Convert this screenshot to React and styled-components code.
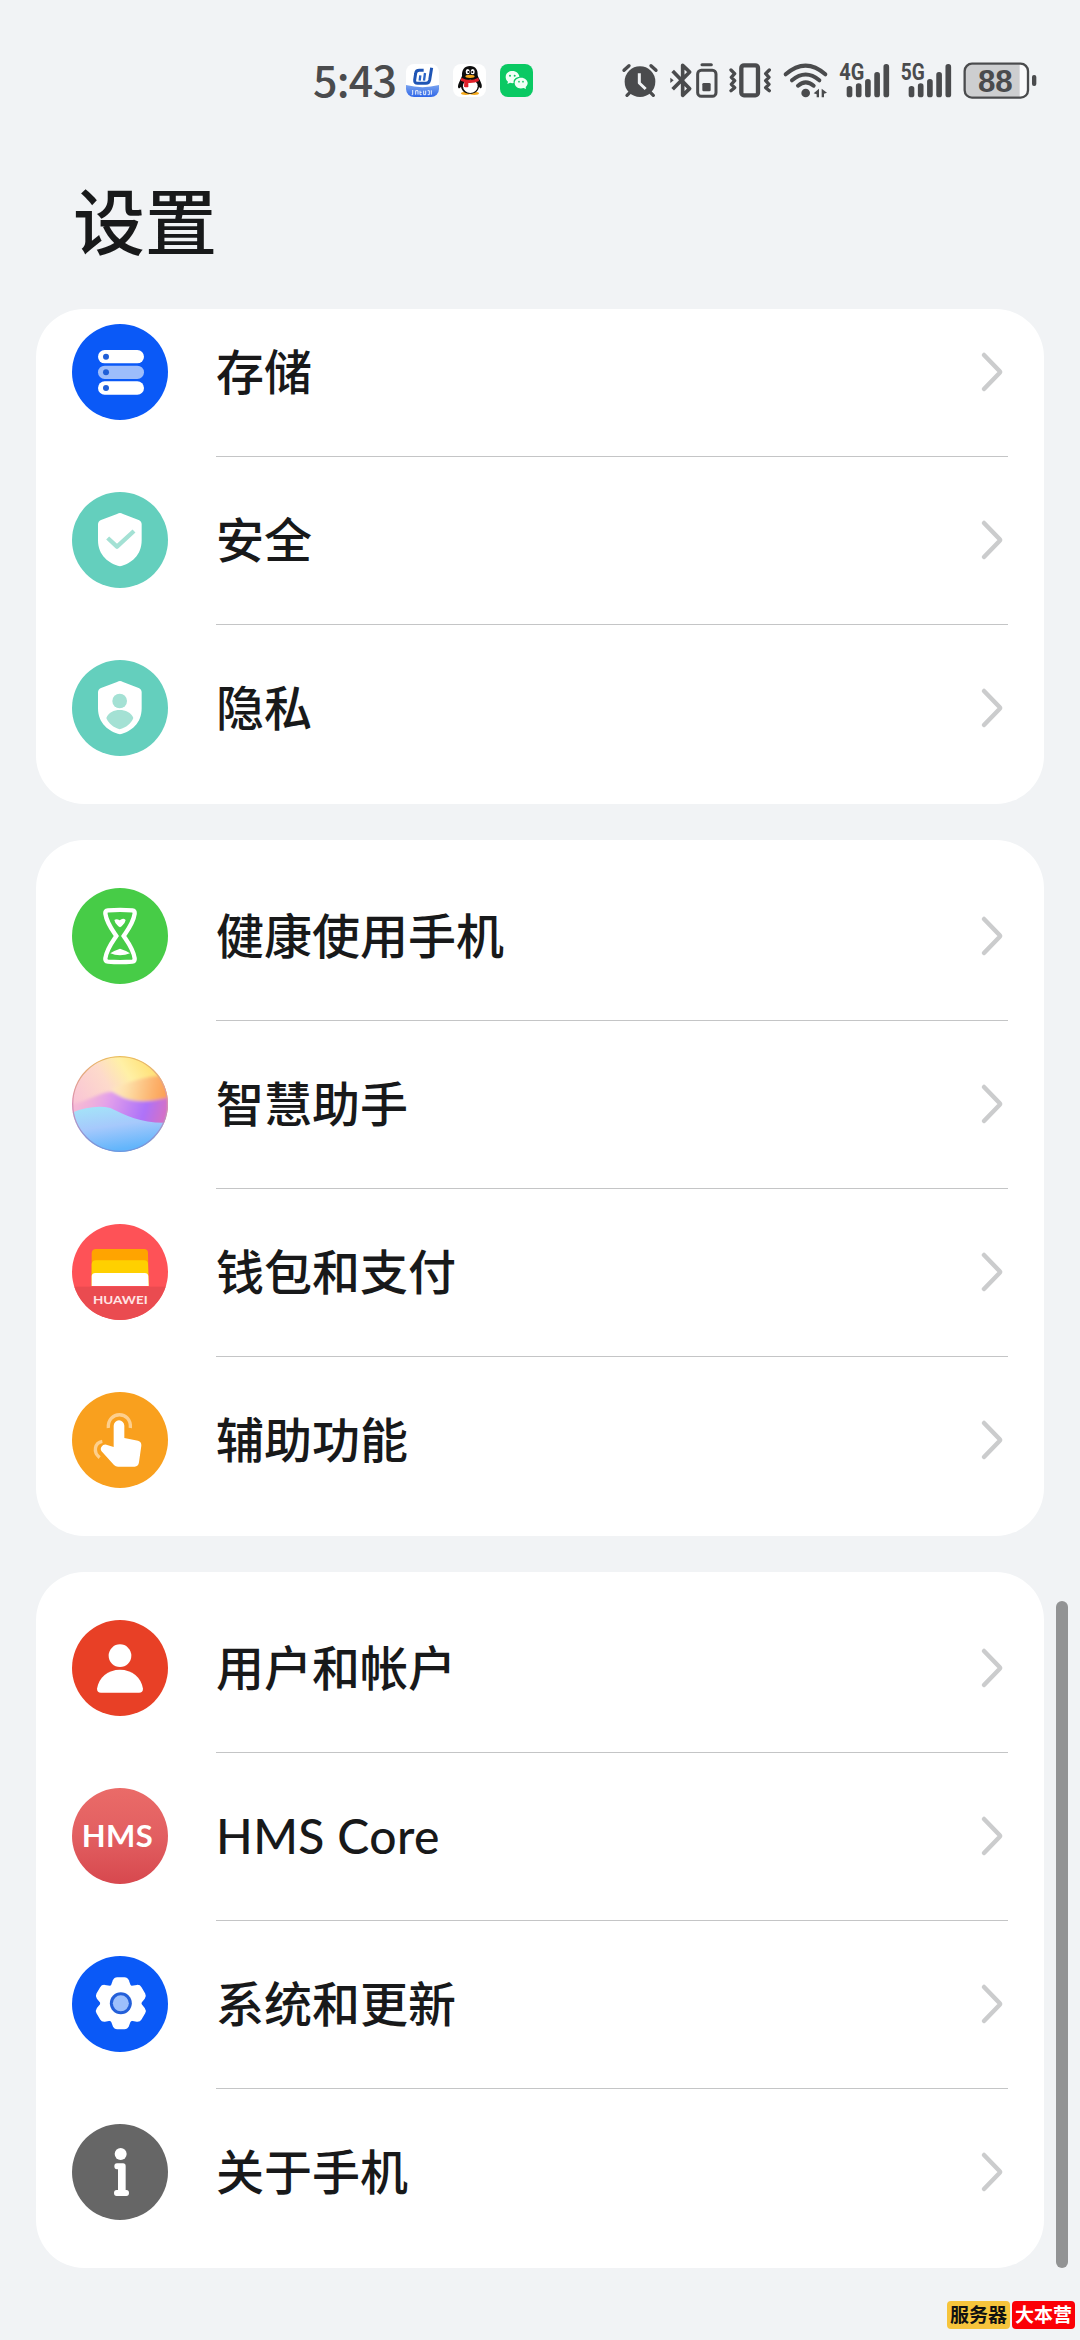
import React from 'react';
import styled, { createGlobalStyle } from 'styled-components';

const GlobalStyle = createGlobalStyle`
  * {
    box-sizing: border-box;
  }
  body {
    margin: 0;
    background: #f1f3f5;
    font-family: "Noto Sans CJK SC", "Noto Sans", sans-serif;
  }
`;

const INK = '#4a4b4d';

const Screen = styled.div`
  position: relative;
  display: flex;
  flex-direction: column;
  width: 1080px;
  height: 2340px;
  overflow: hidden;
  background: #f1f3f5;
  color: #18191a;
`;

const StatusBar = styled.div`
  display: flex;
  align-items: center;
  height: 165px;
  padding: 0 40px 0 313px;
  color: ${INK};
`;

const Clock = styled.span`
  width: 93px;
  font-family: "Noto Sans CJK SC", sans-serif;
  font-size: 43px;
  font-weight: 500;
  line-height: 60px;
  letter-spacing: -0.8px;
  margin-bottom: 9px;
  white-space: nowrap;
`;

const AppIcons = styled.div`
  display: flex;
  gap: 14px;
  margin-bottom: 4px;
`;

const AppIcon = styled.svg`
  display: block;
  width: 33px;
  height: 33px;
  border-radius: 8px;
  background: ${(props) => props.$bg || 'white'};
`;

const SystemIcons = styled.div`
  display: flex;
  margin-left: auto;
`;

const SystemIcon = styled.svg`
  display: block;
  width: ${(props) => props.$w}px;
  height: 65px;
`;

const Title = styled.h1`
  margin: 0;
  height: 144px;
  padding-left: 73px;
  font-size: 72px;
  font-weight: 500;
  line-height: 105px;
`;

const Cards = styled.main`
  display: flex;
  flex-direction: column;
  gap: 36px;
  padding: 0 36px;
`;

const Card = styled.section`
  padding: ${(props) => (props.$scrolled ? '0 36px 12px' : '12px 36px')};
  border-radius: 48px;
  background: white;
  overflow: hidden;
`;

const Rows = styled.div`
  margin-top: ${(props) => (props.$scrolled ? '-21px' : '0')};
`;

const Row = styled.div`
  display: flex;
  align-items: center;
  height: 168px;
`;

const RowIcon = styled.svg`
  flex: none;
  width: 96px;
  height: 96px;
  margin-right: 48px;
  border-radius: 50%;
  background: ${(props) => props.$bg};
`;

const RowBody = styled.div`
  display: flex;
  align-items: center;
  justify-content: space-between;
  flex: 1;
  height: 168px;
  padding: 0 3px 1px 0;
  border-top: 1px solid ${(props) => (props.$divided ? '#c4c5c6' : 'transparent')};
`;

const Label = styled.span`
  font-family: ${(props) => (props.$latin ? 'Lato, sans-serif' : 'inherit')};
  font-size: 48px;
  font-weight: 500;
  line-height: 72px;
  letter-spacing: ${(props) => (props.$latin ? '0.4px' : '0')};
  padding-bottom: ${(props) => (props.$latin ? '0' : '7px')};
`;

const Chevron = styled.svg`
  width: 26px;
  height: 42px;
`;

const ScrollBar = styled.div`
  position: absolute;
  top: 1601px;
  right: 12px;
  width: 12px;
  height: 667px;
  border-radius: 6px;
  background: #929394;
`;

const Stamp = styled.div`
  position: absolute;
  right: 5px;
  bottom: 11px;
  display: flex;
  gap: 2px;
`;

const StampPart = styled.span`
  width: 63px;
  height: 28px;
  border-radius: 4px;
  background: ${(props) => props.$bg};
  color: ${(props) => props.$color};
  font-size: 19px;
  font-weight: 700;
  line-height: 26px;
  text-align: center;
`;

const SHIELD =
  'M144 63Q148 63 153 66L200 84Q209 88 209 97V145C209 190 178 215 144 223C110 215 78 190 78 145V97Q78 88 87 84L135 66Q140 63 144 63Z';

const StorageIcon = () => (
  <RowIcon $bg="#0a59f7" viewBox="0 0 288 288">
    {[78, 125, 172].map((y, i) => (
      <g key={y}>
        <rect x="78" y={y} width="138" height="40" rx="20" fill={i === 1 ? '#9dbdfb' : 'white'} />
        <circle cx="102" cy={y + 20} r="9" fill="#1f5fd8" />
      </g>
    ))}
  </RowIcon>
);

const SecurityIcon = () => (
  <RowIcon $bg="#64cfbd" viewBox="0 0 288 288">
    <path d={SHIELD} fill="white" />
    <path d="M107 138L135 164L186 117" fill="none" stroke="#a4e1d4" strokeWidth="13" strokeLinejoin="round" />
  </RowIcon>
);

const PrivacyIcon = () => (
  <RowIcon $bg="#64cfbd" viewBox="0 0 288 288">
    <path d={SHIELD} fill="white" />
    <circle cx="143" cy="123" r="22" fill="#a4e1d4" />
    <path d="M103 174C109 158 126 150 143 150S178 158 184 174C178 190 162 203 143 208C125 203 109 190 103 174Z" fill="#a4e1d4" />
  </RowIcon>
);

const HourglassIcon = () => (
  <RowIcon $bg="#47cc47" viewBox="0 0 288 288">
    <path
      d="M108 67Q144 64 181 67Q189 68 188 77C184 105 168 125 155 144C168 163 184 183 188 211Q189 220 181 221Q144 224 108 221Q99 220 100 211C104 183 120 163 133 144C120 125 104 105 100 77Q99 68 108 67Z"
      fill="none"
      stroke="white"
      strokeWidth="13"
    />
    <path d="M127 96Q134 91 143 97Q153 88 161 96Q160 105 149 115Q144 120 139 115Q128 105 127 96Z" fill="white" />
    <path d="M115 196Q128 187 144 182Q161 187 174 196Q160 202 144 202T115 196Z" fill="white" />
  </RowIcon>
);

const AssistantIcon = () => (
  <RowIcon $bg="#fbd9d6" viewBox="0 0 288 288">
    <defs>
      <linearGradient id="as-sky" x1="0" y1="0.5" x2="0.8" y2="0">
        <stop offset="0" stopColor="#f9c3d6" />
        <stop offset="0.45" stopColor="#fddacb" />
        <stop offset="0.7" stopColor="#fff0a6" />
        <stop offset="1" stopColor="#ffdf70" />
      </linearGradient>
      <linearGradient id="as-orange" x1="0" y1="0" x2="1" y2="0.1">
        <stop offset="0" stopColor="#fff0c4" stopOpacity="0.3" />
        <stop offset="0.35" stopColor="#fdd9a0" />
        <stop offset="0.75" stopColor="#fcb06a" />
        <stop offset="1" stopColor="#fb9d50" />
      </linearGradient>
      <linearGradient id="as-purple" x1="0" y1="0" x2="1" y2="0.1">
        <stop offset="0" stopColor="#f6b4cf" stopOpacity="0.4" />
        <stop offset="0.4" stopColor="#e3a0ea" />
        <stop offset="0.78" stopColor="#ad72f9" />
        <stop offset="1" stopColor="#d670c4" />
      </linearGradient>
      <linearGradient id="as-blue" x1="0" y1="0" x2="0.3" y2="1">
        <stop offset="0" stopColor="#a4e6f8" />
        <stop offset="0.5" stopColor="#a6c9fc" />
        <stop offset="1" stopColor="#62b5fb" />
      </linearGradient>
      <linearGradient id="as-rim" x1="0" y1="0" x2="0" y2="1">
        <stop offset="0" stopColor="#e8bc62" />
        <stop offset="0.5" stopColor="#d98fb5" />
        <stop offset="1" stopColor="#6f96dd" />
      </linearGradient>
      <filter id="as-soft">
        <feGaussianBlur stdDeviation="4" />
      </filter>
    </defs>
    <rect width="288" height="288" fill="url(#as-sky)" />
    <g filter="url(#as-soft)">
      <path d="M118 96C165 84 200 60 300 56V160H140Z" fill="url(#as-orange)" />
      <path d="M-10 146C50 138 85 104 122 108C165 136 205 146 300 122V212H-10Z" fill="url(#as-purple)" />
    </g>
    <path d="M0 170C40 154 80 148 115 156C165 180 210 203 288 200V288H0Z" fill="url(#as-blue)" />
    <circle cx="144" cy="144" r="142" fill="none" stroke="url(#as-rim)" strokeWidth="4" />
  </RowIcon>
);

const WalletIcon = () => (
  <RowIcon $bg="#fe5257" viewBox="0 0 288 288">
    <rect y="188" width="288" height="100" fill="#ea4b50" />
    <path d="M59 186V87Q60 75 72 75H216Q228 75 228 87L230 186Z" fill="#ffa400" />
    <path d="M59 186V121Q60 109 72 109H216Q228 109 228 121L230 186Z" fill="#ffd000" />
    <path d="M59 186V156Q60 147 70 147H218Q228 147 229 156L230 186Z" fill="white" />
    <text x="63" y="239" fontFamily="Lato" fontWeight="700" fontSize="36" fill="#ffe4e4" textLength="164" lengthAdjust="spacingAndGlyphs">
      HUAWEI
    </text>
  </RowIcon>
);

const TouchIcon = () => (
  <RowIcon $bg="#f9a01e" viewBox="0 0 288 288">
    <path d="M109 108C105 55 180 55 175 108M91 148C68 152 62 180 83 197" fill="none" stroke="#fdcf8d" strokeWidth="10" />
    <path
      d="M125 165V101a16 16 0 0 1 32 0V138L198 146Q209 149 208 161L201 211Q199 224 188 224H138Q131 224 126 219L88 177Q84 171 88 165Q94 156 103 158Z"
      fill="white"
    />
  </RowIcon>
);

const UserIcon = () => (
  <RowIcon $bg="#e84026" viewBox="0 0 288 288">
    <circle cx="144" cy="107" r="34" fill="white" />
    <path d="M75 206C80 172 108 149 144 149S208 172 213 206Q213 218 201 218H87Q75 218 75 206Z" fill="white" />
  </RowIcon>
);

const HmsIcon = () => (
  <RowIcon $bg="linear-gradient(#ea6b68, #e25f61 50%, #d7484e)" viewBox="0 0 288 288">
    <text x="29 102 191" y="178" fontFamily="Lato" fontWeight="700" fontSize="93" fill="white">
      HMS
    </text>
  </RowIcon>
);

const GearIcon = () => (
  <RowIcon $bg="#0a59f7" viewBox="0 0 288 288">
    <g transform="translate(146.500 142)" fill="white">
      <circle r="62" />
      {[0, 60, 120, 180, 240, 300].map((deg) => (
        <path key={deg} transform={`rotate(${deg})`} d="M-31 -50L-24 -69Q-20 -78 -11 -78H11Q20 -78 24 -69L31 -50Z" />
      ))}
      <circle r="33" fill="#235fd9" />
      <circle r="24" fill="#9dc0fc" />
    </g>
  </RowIcon>
);

const AboutIcon = () => (
  <RowIcon $bg="#666" viewBox="0 0 288 288">
    <circle cx="146" cy="90" r="18" fill="white" />
    <path
      d="M135 118H153Q161 118 161 126V198H163Q171 198 171 207T163 216H134Q126 216 126 207T134 198H138V136H135Q127 136 127 127T135 118Z"
      fill="white"
    />
  </RowIcon>
);

const groups = [
  {
    scrolled: true,
    items: [
      { label: '存储', Icon: StorageIcon },
      { label: '安全', Icon: SecurityIcon },
      { label: '隐私', Icon: PrivacyIcon },
    ],
  },
  {
    items: [
      { label: '健康使用手机', Icon: HourglassIcon },
      { label: '智慧助手', Icon: AssistantIcon },
      { label: '钱包和支付', Icon: WalletIcon },
      { label: '辅助功能', Icon: TouchIcon },
    ],
  },
  {
    items: [
      { label: '用户和帐户', Icon: UserIcon },
      { label: 'HMS Core', Icon: HmsIcon, latin: true },
      { label: '系统和更新', Icon: GearIcon },
      { label: '关于手机', Icon: AboutIcon },
    ],
  },
];

const NotificationIcons = () => (
  <AppIcons>
    <AppIcon viewBox="0 0 99 99">
      <defs>
        <linearGradient id="app-band" x1="0" y1="0" x2="0" y2="1">
          <stop offset="0" stopColor="#79a3ef" />
          <stop offset="1" stopColor="#2f66e8" />
        </linearGradient>
      </defs>
      <path d="M0 63Q50 76 99 63V99H0Z" fill="url(#app-band)" />
      <path d="M53 19H40Q30 19 29 28L26 48Q25 58 35 58H60Q69 58 71 48L77 11" fill="none" stroke="#1f55b5" strokeWidth="9" />
      <path d="M43 34L41 50M57 27L54 50" stroke="#2c66c8" strokeWidth="7" />
      <path d="M20 78V92M20 92H17M29 80V92M29 80H36V92M42 80V92H47M42 85H47M53 80V92H59V80M65 80H70V92H65M76 79V92" stroke="white" strokeWidth="3" fill="none" opacity="0.85" />
    </AppIcon>
    <AppIcon viewBox="0 0 99 99">
      <ellipse cx="38" cy="88" rx="14" ry="5" fill="#f5a91c" />
      <ellipse cx="64" cy="88" rx="14" ry="5" fill="#f5a91c" />
      <path d="M51 6C68 6 75 18 74 34C76 41 80 46 83 54C88 63 87 71 84 73C81 73 79 69 78 68C76 82 66 89 51 89S27 82 24 68C22 71 19 74 16 72C13 67 17 58 20 52L27 36C26 18 34 6 51 6Z" fill="#0d0d0d" />
      <ellipse cx="52" cy="67" rx="22" ry="20" fill="white" />
      <ellipse cx="44" cy="23" rx="6" ry="8" fill="white" />
      <ellipse cx="59" cy="23" rx="6" ry="8" fill="white" />
      <circle cx="46" cy="24" r="3" />
      <circle cx="58" cy="24" r="3" />
      <ellipse cx="51" cy="37" rx="14" ry="5" fill="#f5a91c" />
      <path d="M25 41Q51 55 76 41L78 51Q65 58 46 57V69Q39 71 33 68L34 54L23 50Z" fill="#df2029" />
    </AppIcon>
    <AppIcon $bg="#0ac963" viewBox="0 0 99 99">
      <path d="M37 21C49 21 58 29 58 39C47 39 39 47 41 57C37 58 33 57 30 56L22 60L24 53C12 44 15 21 37 21Z" fill="#f1fff5" />
      <path d="M63 41C75 41 83 49 83 57C83 62 80 66 77 69L78 75L71 72C55 77 44 67 44 57C44 48 52 41 63 41Z" fill="#f1fff5" />
      <g fill="#0ac963">
        <circle cx="30" cy="35" r="3" />
        <circle cx="44" cy="35" r="3" />
        <circle cx="57" cy="53" r="2.500" />
        <circle cx="69" cy="53" r="2.500" />
      </g>
    </AppIcon>
  </AppIcons>
);

const Signal = ({ name, first, textX, textW, box, w }) => (
  <SystemIcon $w={w} viewBox={box}>
    <text x={textX} y="91" fontFamily="Roboto" fontWeight="700" fontSize="69" fill={INK} textLength={textW} lengthAdjust="spacingAndGlyphs">
      {name}
    </text>
    {[108, 100, 87, 66, 42].map((top, i) => (
      <rect key={top} x={first + i * 27.6} y={top} width="17" height={142 - top} rx="8" fill={INK} />
    ))}
  </SystemIcon>
);

const StatusIcons = () => (
  <SystemIcons>
    <SystemIcon $w={46.667} viewBox="30 0 140 195">
      <circle cx="90" cy="95" r="46" fill={INK} />
      <path d="M42 61L57 47M123 47L138 61M51 136L60 127M130 136L121 127" stroke={INK} strokeWidth="10" strokeLinecap="round" />
      <path d="M88 70V99L107 117" fill="none" stroke="#f1f3f5" strokeWidth="9" strokeLinejoin="round" />
    </SystemIcon>
    <SystemIcon $w={58.333} viewBox="170 0 175 195">
      <g fill="none" stroke={INK} strokeWidth="9" strokeLinejoin="round">
        <path d="M187 63L238 116L217 136V46L238 66L187 118" strokeWidth="11" />
        <rect x="262" y="61" width="55" height="78" rx="11" />
        <path d="M275 44H303" strokeLinecap="round" />
      </g>
      <path d="M180 83L190 91L180 99Z" fill={INK} />
      <rect x="276" y="99" width="25" height="25" rx="4" fill={INK} />
    </SystemIcon>
    <SystemIcon $w={51.667} viewBox="345 0 155 195">
      <g fill="none" stroke={INK} strokeWidth="10" strokeLinejoin="round" strokeLinecap="round">
        <rect x="394" y="46" width="50" height="90" rx="8" strokeWidth="13" />
        <path d="M363 60L374 71L364 82L374 92L364 103L374 113L363 122M478 60L467 71L477 82L467 92L477 103L467 113L478 122" />
      </g>
    </SystemIcon>
    <SystemIcon $w={60} viewBox="500 0 180 195">
      <g fill="none" stroke={INK} strokeWidth="12" strokeLinecap="round">
        <path d="M526 73Q586 21 645 73" />
        <path d="M545 91Q586 56 627 91" />
        <path d="M563 107Q586 87 610 107" />
      </g>
      <circle cx="586" cy="129" r="13" fill={INK} />
      <path d="M610 130L626 116V142H619V133Z M634 142V116L650 128L641 131V142Z" fill={INK} />
    </SystemIcon>
    <Signal name="4G" box="20 0 180 195" w={60} first={49} textX={27} textW={75} />
    <Signal name="5G" box="200 0 180 195" w={60} first={235} textX={211} textW={72} />
    <SystemIcon $w={83.333} viewBox="380 0 250 195">
      <rect x="403" y="41" width="190" height="102" rx="22" fill="#fafafb" />
      <path d="M568 44H425Q406 44 406 63V121Q406 140 425 140H568Z" fill="#cdced0" />
      <rect x="403" y="41" width="190" height="102" rx="22" fill="none" stroke={INK} strokeWidth="7" />
      <rect x="605" y="75" width="13" height="33" rx="6" fill={INK} />
      <text x="495" y="125" fontFamily="Liberation Sans" fontWeight="700" fontSize="94" fill={INK} textAnchor="middle">
        88
      </text>
    </SystemIcon>
  </SystemIcons>
);

const SettingsRow = ({ item, divided }) => {
  const { label, Icon, latin } = item;
  return (
    <Row>
      <Icon />
      <RowBody $divided={divided}>
        <Label $latin={latin}>{label}</Label>
        <Chevron viewBox="0 0 26 42">
          <path d="M5 4L20.500 20Q21.500 21 20.500 22L5 38" fill="none" stroke="#cbcccd" strokeWidth="4.500" strokeLinecap="round" />
        </Chevron>
      </RowBody>
    </Row>
  );
};

const App = () => {
  return (
    <Screen>
      <GlobalStyle />
      <StatusBar>
        <Clock>5:43</Clock>
        <NotificationIcons />
        <StatusIcons />
      </StatusBar>
      <Title>设置</Title>
      <Cards>
        {groups.map((group, index) => (
          <Card key={index} $scrolled={group.scrolled}>
            <Rows $scrolled={group.scrolled}>
              {group.items.map((item, i) => (
                <SettingsRow key={item.label} item={item} divided={i > 0} />
              ))}
            </Rows>
          </Card>
        ))}
      </Cards>
      <ScrollBar />
      <Stamp>
        <StampPart $bg="#f6c43c" $color="#111">服务器</StampPart>
        <StampPart $bg="#fb0006" $color="white">大本营</StampPart>
      </Stamp>
    </Screen>
  );
};

export default App;
